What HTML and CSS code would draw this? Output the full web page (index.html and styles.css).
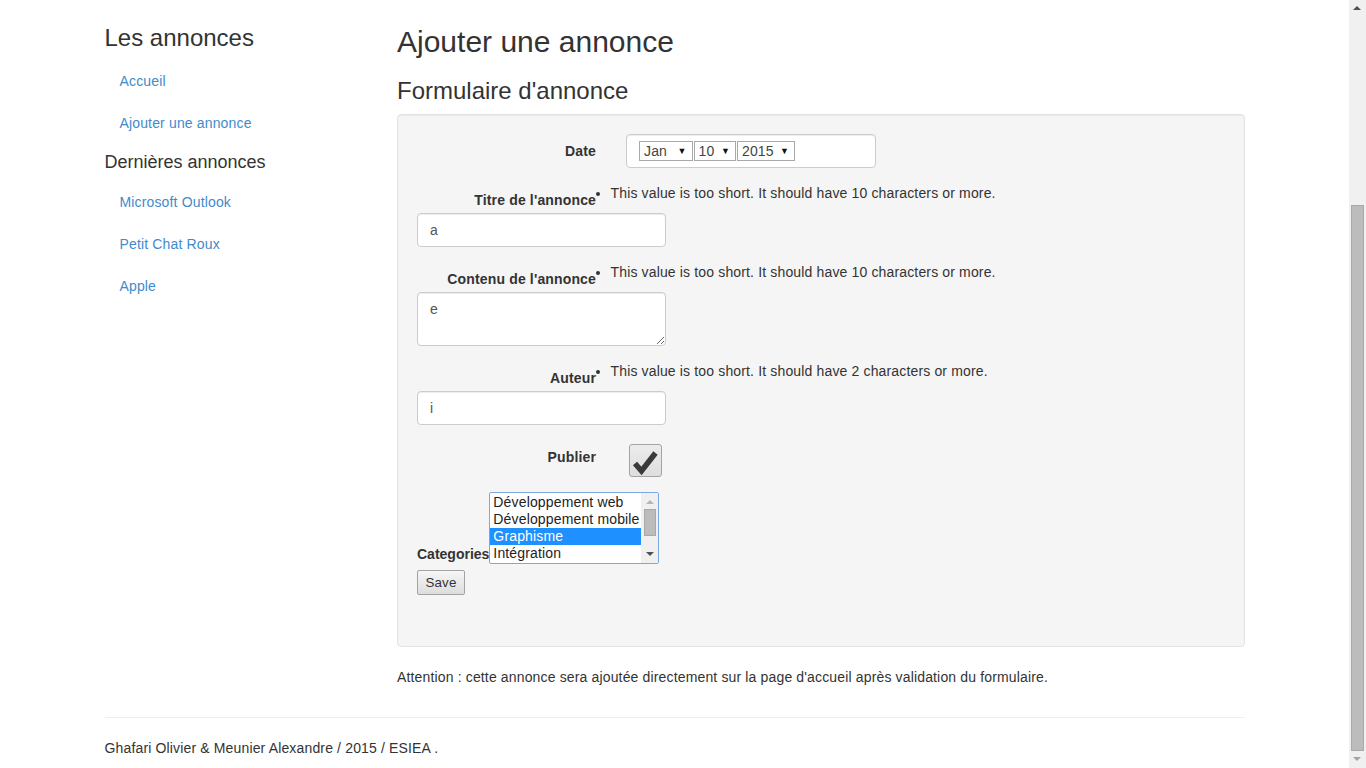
FILE: index.html
```html
<!DOCTYPE html>
<html lang="fr">
<head>
<meta charset="utf-8">
<title>Ajouter une annonce</title>
<link rel="stylesheet" href="styles.css">
</head>
<body>
<div class="page">
  <div class="container">
    <div class="layout">
      <aside class="sidebar">
        <h3 class="side-title">Les annonces</h3>
        <ul class="nav">
          <li><a href="#">Accueil</a></li>
          <li><a href="#">Ajouter une annonce</a></li>
        </ul>
        <h4 class="side-sub">Dernières annonces</h4>
        <ul class="nav">
          <li><a href="#">Microsoft Outlook</a></li>
          <li><a href="#">Petit Chat Roux</a></li>
          <li><a href="#">Apple</a></li>
        </ul>
      </aside>
      <main class="main">
        <h2 class="page-title">Ajouter une annonce</h2>
        <h3 class="form-title">Formulaire d'annonce</h3>
        <div class="well">
          <form class="form">
            <div class="fg">
              <label class="ctl-label">Date</label>
              <div class="date-box">
                <span class="sel sel-month">Jan<span class="arrow">▼</span></span><span class="sel sel-day">10<span class="arrow">▼</span></span><span class="sel sel-year">2015<span class="arrow">▼</span></span>
              </div>
            </div>

            <div class="fg-stack">
              <div class="fg-head">
                <label class="ctl-label">Titre de l'annonce</label>
                <ul class="errors"><li>This value is too short. It should have 10 characters or more.</li></ul>
              </div>
              <input class="form-control" type="text" value="a">
            </div>

            <div class="fg-stack">
              <div class="fg-head">
                <label class="ctl-label">Contenu de l'annonce</label>
                <ul class="errors"><li>This value is too short. It should have 10 characters or more.</li></ul>
              </div>
              <textarea class="form-control area">e</textarea>
            </div>

            <div class="fg-stack">
              <div class="fg-head">
                <label class="ctl-label">Auteur</label>
                <ul class="errors"><li>This value is too short. It should have 2 characters or more.</li></ul>
              </div>
              <input class="form-control" type="text" value="i">
            </div>

            <div class="fg">
              <label class="ctl-label">Publier</label>
              <span class="check">
                <svg width="31" height="31" viewBox="0 0 31 31" aria-hidden="true"><path d="M5 18.5 L11.5 26 L25.5 8" fill="none" stroke="#3a3a3a" stroke-width="5.5" stroke-linejoin="miter" stroke-linecap="butt"/></svg>
              </span>
            </div>

            <div class="fg-cat">
              <label class="cat-label">Categories</label>
              <div class="listbox">
                <div class="opts">
                  <div class="opt">Développement web</div>
                  <div class="opt">Développement mobile</div>
                  <div class="opt opt-selected">Graphisme</div>
                  <div class="opt">Intégration</div>
                </div>
                <div class="lb-scroll">
                  <span class="lb-up"></span>
                  <span class="lb-track"><span class="lb-thumb"></span></span>
                  <span class="lb-down"></span>
                </div>
              </div>
            </div>

            <div class="fg-save">
              <button type="button" class="btn-save">Save</button>
            </div>
          </form>
        </div>
        <p class="notice">Attention : cette annonce sera ajoutée directement sur la page d'accueil après validation du formulaire.</p>
      </main>
    </div>
    <hr class="sep">
    <footer class="footer">
      <p>Ghafari Olivier &amp; Meunier Alexandre / 2015 / ESIEA .</p>
    </footer>
  </div>
</div>
<div class="scrollbar">
  <span class="sb-up"></span>
  <span class="sb-thumb"></span>
  <span class="sb-down"></span>
</div>
</body>
</html>
```

FILE: styles.css
```css
html, body {
  margin: 0;
  padding: 0;
}
body {
  font-family: "Liberation Sans", Arial, Helvetica, sans-serif;
  font-size: 14px;
  line-height: 20px;
  letter-spacing: 0.15px;
  color: #333;
  background: #fff;
  overflow: hidden;
}
.page {
  width: 1349px;
}
.container {
  width: 1140px;
  margin: 0 auto;
  padding-top: 4.5px;
}
.layout {
  display: grid;
  grid-template-columns: 262.5px 847.5px;
  column-gap: 30px;
}

/* Sidebar */
.side-title,
.form-title {
  font-size: 24px;
  font-weight: 500;
  line-height: 1.1;
  letter-spacing: 0;
  margin: 20px 0 10px;
}
.side-sub {
  font-size: 18px;
  font-weight: 500;
  line-height: 1.1;
  letter-spacing: 0;
  margin: 10px 0 9px;
}
.nav {
  list-style: none;
  margin: 0;
  padding: 0;
}
.nav li + li {
  margin-top: 2px;
}
.nav a {
  display: block;
  padding: 10px 15px;
  color: #428bca;
  text-decoration: none;
}

/* Main */
.page-title {
  font-size: 30px;
  font-weight: 500;
  line-height: 1.1;
  letter-spacing: 0;
  margin: 20px 0 10px;
}
.well {
  background: #f5f5f5;
  border: 1px solid #e3e3e3;
  border-radius: 4px;
  box-shadow: inset 0 1px 1px rgba(0, 0, 0, 0.05);
  padding: 19px 19px 19px;
  margin-bottom: 20px;
}
.form {
  margin: 0;
}
.fg {
  display: flex;
  margin-bottom: 15px;
}
.ctl-label {
  width: 179px;
  flex: none;
  text-align: right;
  padding-top: 7px;
  font-weight: bold;
  margin: 0;
}

/* Date */
.date-box {
  margin-left: 30px;
  width: 250px;
  height: 34px;
  box-sizing: border-box;
  padding: 6px 12px;
  background: #fff;
  border: 1px solid #ccc;
  border-radius: 4px;
  box-shadow: inset 0 1px 1px rgba(0, 0, 0, 0.075);
  display: flex;
}
.sel {
  display: flex;
  align-items: center;
  justify-content: space-between;
  box-sizing: border-box;
  height: 20px;
  border: 1px solid #a9a9a9;
  padding: 0 5px 0 4px;
  background: #fff;
  color: #444;
  font-size: 14px;
  line-height: 18px;
}
.sel + .sel {
  margin-left: 1px;
}
.sel-month { width: 53.5px; }
.sel-day { width: 42.5px; }
.sel-year { width: 58px; }
.arrow {
  font-size: 9px;
  color: #111;
  line-height: 18px;
}

/* Stacked fields with errors */
.fg-stack {
  margin-bottom: 15px;
}
.fg-head {
  display: flex;
  height: 30px;
}
.errors {
  margin: 0;
  padding: 0 0 0 14.5px;
  list-style: disc;
  color: #333;
}
.errors li {
  line-height: 20px;
}
.form-control {
  display: block;
  width: 249px;
  height: 34px;
  box-sizing: border-box;
  padding: 6px 12px;
  margin: 0;
  font-family: "Liberation Sans", Arial, Helvetica, sans-serif;
  font-size: 14px;
  line-height: 20px;
  color: #555;
  background: #fff;
  border: 1px solid #ccc;
  border-radius: 4px;
  box-shadow: inset 0 1px 1px rgba(0, 0, 0, 0.075);
}
.area {
  height: 54px;
  resize: vertical;
}

/* Checkbox */
.check {
  margin-left: 33px;
  margin-top: 4px;
  width: 33px;
  height: 33px;
  box-sizing: border-box;
  border: 1px solid #a4a4a4;
  border-radius: 3px;
  background: linear-gradient(#ececec, #dedede);
  display: flex;
  align-items: center;
  justify-content: center;
}
.check svg {
  display: block;
}

/* Categories */
.fg-cat {
  display: flex;
  align-items: flex-end;
}
.cat-label {
  font-weight: bold;
  line-height: 20px;
  letter-spacing: 0;
}
.listbox {
  width: 170px;
  height: 72px;
  box-sizing: border-box;
  border: 1px solid #7ea7e2;
  border-radius: 2px;
  background: #fff;
  display: flex;
  overflow: hidden;
}
.opts {
  width: 151px;
  padding-top: 1px;
}
.opt {
  height: 17px;
  line-height: 17px;
  padding-left: 3px;
  font-size: 14px;
  color: #222;
  white-space: nowrap;
  overflow: hidden;
}
.opt-selected {
  background: #1e90ff;
  color: #fff;
}
.lb-scroll {
  flex: 1;
  background: #f0f0f0;
  display: flex;
  flex-direction: column;
  align-items: center;
  padding: 4px 0;
  box-sizing: border-box;
}
.lb-up,
.lb-down {
  width: 0;
  height: 0;
  border-left: 4px solid transparent;
  border-right: 4px solid transparent;
  margin: 3px 0;
}
.lb-up {
  border-bottom: 4px solid #b5b5b5;
}
.lb-down {
  border-top: 4px solid #505050;
}
.lb-track {
  flex: 1;
  width: 100%;
  padding-top: 2px;
  display: flex;
  justify-content: center;
}
.lb-thumb {
  width: 12px;
  height: 27px;
  box-sizing: border-box;
  background: #bcbcbc;
  border: 1px solid #a8a8a8;
}

/* Save */
.fg-save {
  margin-top: 6px;
  margin-bottom: 32px;
}
.btn-save {
  width: 48px;
  height: 25px;
  padding: 0;
  font-family: "Liberation Sans", Arial, Helvetica, sans-serif;
  font-size: 13.33px;
  letter-spacing: 0.15px;
  color: #333;
  border: 1px solid #a3a3a3;
  border-radius: 2px;
  background: linear-gradient(#f6f6f6, #dddddd);
}

.notice {
  margin: 0 0 10px;
}
.sep {
  margin: 20px 0;
  border: 0;
  border-top: 1px solid #eee;
}
.footer p {
  margin: 0 0 10px;
}

/* Window scrollbar (page is scrolled to the bottom) */
.scrollbar {
  position: fixed;
  top: 0;
  right: 0;
  width: 17px;
  height: 100%;
  background: #f0f0f0;
}
.sb-up,
.sb-down,
.sb-thumb {
  position: absolute;
  display: block;
}
.sb-up {
  top: 6px;
  left: 4px;
  width: 0;
  height: 0;
  border-left: 4px solid transparent;
  border-right: 4px solid transparent;
  border-bottom: 4px solid #505050;
}
.sb-down {
  top: 757px;
  left: 4px;
  width: 0;
  height: 0;
  border-left: 4px solid transparent;
  border-right: 4px solid transparent;
  border-top: 4px solid #a3a3a3;
}
.sb-thumb {
  top: 205px;
  left: 2px;
  width: 13px;
  height: 546px;
  box-sizing: border-box;
  background: #bcbcbc;
  border: 1px solid #a9a9a9;
}
```
